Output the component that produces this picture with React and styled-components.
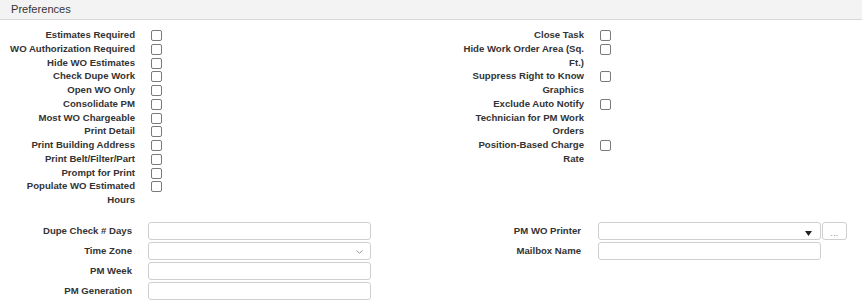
import React from "react";
import styled, { createGlobalStyle } from "styled-components";

const GlobalStyle = createGlobalStyle`
  body {
    margin: 0;
    background: #fff;
    font-family: "Liberation Sans", Arial, sans-serif;
    color: #333;
  }
`;

const Panel = styled.div`
  width: 862px;
  height: 307px;
  overflow: hidden;
`;

const Header = styled.div`
  height: 19px;
  line-height: 19px;
  padding-left: 11px;
  background: #f3f3f3;
  border-bottom: 1px solid #d6d6d6;
  font-size: 11.1px;
  color: #333;
`;

const Columns = styled.div`
  display: grid;
  grid-template-columns: 449px 1fr;
  align-items: start;
`;

const CheckSection = styled(Columns)`
  padding-top: 8px;
`;

const FieldSection = styled(Columns)`
  margin-top: 15px;
`;

const Stack = styled.div`
  display: flex;
  flex-direction: column;
`;

const FieldStack = styled(Stack)`
  gap: 2px;
`;

const CheckRow = styled.div`
  display: flex;
  align-items: flex-start;
  gap: 16px;
  padding-left: 8px;
`;

const Label = styled.div`
  width: 127px;
  text-align: right;
  font-size: 9.6px;
  font-weight: bold;
  line-height: 13.75px;
  color: #333;
`;

const Box = styled.span`
  display: block;
  flex: none;
  width: 9px;
  height: 9px;
  margin-top: 2px;
  border: 1px solid #7a7a7a;
  border-radius: 2px;
  background: #fff;
`;

const FieldRow = styled.div`
  display: flex;
  align-items: center;
  height: 18px;
  padding-left: 8px;
`;

const FieldLabel = styled(Label)`
  width: 124px;
  margin-right: ${(p) => p.$gap || 16}px;
`;

const TextBox = styled.div`
  position: relative;
  box-sizing: border-box;
  width: ${(p) => p.$w}px;
  height: 18px;
  border: 1px solid #cfcfcf;
  border-radius: 3px;
  background: #fff;
`;

const Chevron = styled.svg`
  position: absolute;
  right: 7px;
  top: 7px;
`;

const Caret = styled.svg`
  position: absolute;
  right: 8px;
  bottom: 3px;
`;

const DotsButton = styled.div`
  box-sizing: border-box;
  width: 25px;
  height: 18px;
  margin-left: 1px;
  border: 1px solid #cfcfcf;
  border-radius: 3px;
  background: #fff;
  display: flex;
  align-items: flex-end;
  justify-content: center;
  font-size: 8px;
  line-height: 10px;
  color: #666;
  letter-spacing: 0.5px;
`;

const leftChecks = [
  ["Estimates Required"],
  ["WO Authorization Required"],
  ["Hide WO Estimates"],
  ["Check Dupe Work"],
  ["Open WO Only"],
  ["Consolidate PM"],
  ["Most WO Chargeable"],
  ["Print Detail"],
  ["Print Building Address"],
  ["Print Belt/Filter/Part"],
  ["Prompt for Print"],
  ["Populate WO Estimated", "Hours"],
];

const rightChecks = [
  ["Close Task"],
  ["Hide Work Order Area (Sq.", "Ft.)"],
  ["Suppress Right to Know", "Graphics"],
  ["Exclude Auto Notify", "Technician for PM Work", "Orders"],
  ["Position-Based Charge", "Rate"],
];

const CheckList = ({ items }) => (
  <Stack>
    {items.map((lines) => (
      <CheckRow key={lines[0]}>
        <Label>
          {lines.map((l, i) => (
            <div key={i}>{l}</div>
          ))}
        </Label>
        <Box />
      </CheckRow>
    ))}
  </Stack>
);

const App = () => {
  return (
    <Panel>
      <GlobalStyle />
      <Header>Preferences</Header>
      <CheckSection>
        <CheckList items={leftChecks} />
        <CheckList items={rightChecks} />
      </CheckSection>
      <FieldSection>
        <FieldStack>
          <FieldRow>
            <FieldLabel>Dupe Check # Days</FieldLabel>
            <TextBox $w={223} />
          </FieldRow>
          <FieldRow>
            <FieldLabel>Time Zone</FieldLabel>
            <TextBox $w={223}>
              <Chevron width="7" height="4" viewBox="0 0 7 4">
                <path d="M0.5 0.5 L3.5 3.3 L6.5 0.5" fill="none" stroke="#999" strokeWidth="1" />
              </Chevron>
            </TextBox>
          </FieldRow>
          <FieldRow>
            <FieldLabel>PM Week</FieldLabel>
            <TextBox $w={223} />
          </FieldRow>
          <FieldRow>
            <FieldLabel>PM Generation</FieldLabel>
            <TextBox $w={223} />
          </FieldRow>
        </FieldStack>
        <FieldStack>
          <FieldRow>
            <FieldLabel $gap={17}>PM WO Printer</FieldLabel>
            <TextBox $w={223}>
              <Caret width="7" height="5" viewBox="0 0 7 5">
                <path d="M0 0 H7 L3.5 5 Z" fill="#222" />
              </Caret>
            </TextBox>
            <DotsButton>...</DotsButton>
          </FieldRow>
          <FieldRow>
            <FieldLabel $gap={17}>Mailbox Name</FieldLabel>
            <TextBox $w={223} />
          </FieldRow>
        </FieldStack>
      </FieldSection>
    </Panel>
  );
};

export default App;
